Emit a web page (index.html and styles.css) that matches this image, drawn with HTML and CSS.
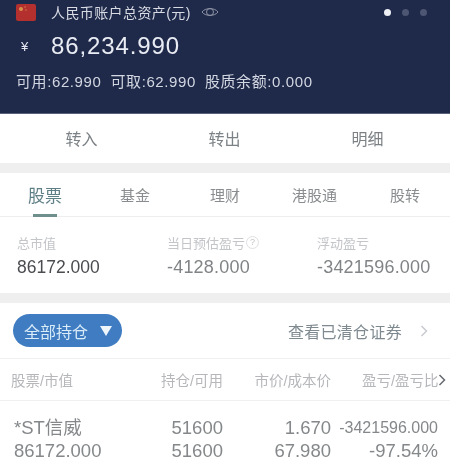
FILE: index.html
```html
<!DOCTYPE html>
<html lang="zh">
<head>
<meta charset="utf-8">
<title>人民币账户总资产</title>
<link rel="stylesheet" href="styles.css">
</head>
<body>
<main class="page">
  <header class="hero">
    <div class="hero-top">
      <svg class="flag" viewBox="0 0 20 17" width="20" height="17"><rect width="20" height="17" rx="2" fill="#b3302e"/><circle cx="5" cy="5" r="2" fill="#d8934a"/><circle cx="9" cy="3" r=".7" fill="#d8934a"/><circle cx="10" cy="6" r=".7" fill="#d8934a"/></svg>
      <span class="hero-title">人民币账户总资产(元)</span>
      <svg class="eye" viewBox="0 0 18 12" width="18" height="12" fill="none" stroke="#8d93a5" stroke-width="1"><path d="M1 6C4 1.500 14 1.500 17 6C14 10.500 4 10.500 1 6Z"/><circle cx="9" cy="6" r="3.500"/></svg>
      <div class="dots"><i class="dot on"></i><i class="dot"></i><i class="dot"></i></div>
    </div>
    <div class="total"><span class="yen">¥</span><span class="amount">86,234.990</span></div>
    <div class="balances"><span>可用:62.990</span><span>可取:62.990</span><span>股质余额:0.000</span></div>
  </header>

  <nav class="actions"><span>转入</span><span>转出</span><span>明细</span></nav>

  <section class="panel">
    <nav class="tabs">
      <span class="tab active">股票</span><span class="tab">基金</span><span class="tab">理财</span><span class="tab">港股通</span><span class="tab">股转</span>
    </nav>
    <div class="stats">
      <div class="stat"><div class="stat-label">总市值</div><div class="stat-value dark">86172.000</div></div>
      <div class="stat"><div class="stat-label">当日预估盈亏<span class="help">?</span></div><div class="stat-value">-4128.000</div></div>
      <div class="stat"><div class="stat-label">浮动盈亏</div><div class="stat-value">-3421596.000</div></div>
    </div>
  </section>

  <section class="holdings">
    <div class="filter-row">
      <button class="pill">全部持仓<span class="caret"></span></button>
      <span class="cleared">查看已清仓证券</span>
      <svg class="chev" viewBox="0 0 8 12" width="8" height="12" fill="none" stroke="#c9cbd0" stroke-width="1.500"><path d="M1.500 1L6.500 6L1.500 11"/></svg>
    </div>
    <div class="table-head">
      <span class="col1">股票/市值</span><span class="col2">持仓/可用</span><span class="col3">市价/成本价</span><span class="col4">盈亏/盈亏比</span>
      <svg class="head-chev" viewBox="0 0 8 12" width="8" height="12" fill="none" stroke="#666a70" stroke-width="1.500"><path d="M1.500 1L6.500 6L1.500 11"/></svg>
    </div>
    <div class="row">
      <div class="col1"><div>*ST信威</div><div>86172.000</div></div>
      <div class="col2"><div>51600</div><div>51600</div></div>
      <div class="col3"><div>1.670</div><div>67.980</div></div>
      <div class="col4"><div class="small">-3421596.000</div><div>-97.54%</div></div>
    </div>
  </section>
</main>
</body>
</html>
```
FILE: styles.css
```css
* { box-sizing: border-box; }
html, body { margin: 0; padding: 0; }
body {
  width: 450px;
  height: 476px;
  overflow: hidden;
  background: #fff;
  font-family: "Liberation Sans", "Noto Sans CJK SC", sans-serif;
}
.page { display: flex; flex-direction: column; height: 476px; filter: blur(0.4px); }

.hero {
  height: 114px;
  background: #1f2a4a;
  color: #e4e7ef;
  padding: 3px 0 0 16px;
  border-bottom: 1px solid #59607a;
}
.hero-top { display: flex; align-items: center; height: 18px; }
.flag { margin-right: 15px; }
.hero-title { font-size: 14px; color: #d8dbe4; letter-spacing: 0.4px; }
.eye { margin-left: 10px; }
.dots { display: flex; gap: 11px; margin-left: auto; margin-right: 23px; }
.dot { width: 7px; height: 7px; border-radius: 50%; background: #4d5672; }
.dot.on { background: #eef0f6; }
.total { display: flex; align-items: center; height: 36px; margin-top: 7px; }
.yen { width: 35px; padding-left: 5px; font-size: 13px; }
.amount { font-size: 24px; letter-spacing: 0.9px; color: #e9ecf3; }
.balances { display: flex; gap: 9px; margin-top: 9px; font-size: 15px; line-height: 18px; color: #d3d7e2; letter-spacing: 0.6px; }

.actions {
  display: flex;
  height: 49px;
  align-items: center;
  padding-bottom: 2px;
  background: #fff;
  font-size: 16px;
  color: #7c8185;
}
.actions span { width: 143px; text-align: center; }
.actions span:nth-child(1) { margin-left: 10px; }

.panel { border-top: 10px solid #efefef; background: #fff; }
.tabs {
  display: flex;
  height: 44px;
  align-items: center;
  border-bottom: 1px solid #eeeeee;
  font-size: 15px;
  color: #8a8d8f;
  padding-left: 28px;
}
.tab { position: relative; }
.tab:nth-child(2) { margin-left: 58px; }
.tab:nth-child(3) { margin-left: 60px; }
.tab:nth-child(4) { margin-left: 52px; }
.tab:nth-child(5) { margin-left: 53px; }
.tab.active { font-size: 17px; color: #5f7f86; }
.tab.active::after {
  content: "";
  position: absolute;
  left: 5px;
  right: 5px;
  bottom: -10px;
  height: 3px;
  background: #6f8f8c;
}
.stats { display: flex; height: 76px; padding: 17px 0 0 17px; }
.stat:nth-child(1) { width: 150px; }
.stat:nth-child(2) { width: 150px; }
.stat-label { display: flex; align-items: center; height: 16px; font-size: 13px; color: #c3c5c8; }
.help {
  display: inline-flex;
  width: 13px;
  height: 13px;
  margin-left: 1px;
  align-items: center;
  justify-content: center;
  border: 1px solid #dfe0e2;
  border-radius: 50%;
  font-size: 9px;
}
.stat-value { margin-top: 7px; font-size: 18px; line-height: 21px; color: #818486; letter-spacing: 0.2px; }
.stat-value.dark { color: #4a4c50; font-size: 17.5px; letter-spacing: 0; }

.holdings { flex: 1; border-top: 10px solid #efefef; background: #fff; }
.filter-row {
  display: flex;
  align-items: center;
  height: 56px;
  border-bottom: 1px solid #f0f0f0;
  padding: 0 22px 0 13px;
}
.pill {
  display: flex;
  align-items: center;
  width: 109px;
  height: 33px;
  padding: 0 0 0 11px;
  border: 0;
  border-radius: 17px;
  background: #3f7cc2;
  color: #d9ecf8;
  font: inherit;
  font-size: 16px;
}
.caret {
  margin-left: 12px;
  border-style: solid;
  border-width: 10px 6px 0;
  border-color: #eef5fb transparent transparent;
}
.cleared { margin-left: auto; margin-right: 18px; font-size: 16px; color: #7f8a90; letter-spacing: 0.3px; }

.table-head {
  display: flex;
  align-items: center;
  height: 42px;
  border-bottom: 1px solid #f0f0f0;
  padding-left: 11px;
  font-size: 14.5px;
  color: #b5b7ba;
  white-space: nowrap;
  overflow: hidden;
}
.head-chev { flex: none; }
.col1 { width: 91px; flex: none; }
.col2 { width: 121px; flex: none; text-align: right; }
.col3 { width: 108px; flex: none; text-align: right; }
.col4 { width: 107px; flex: none; text-align: right; }
.table-head .col4 { padding-left: 31px; text-align: left; overflow: hidden; }

.row {
  display: flex;
  padding: 15px 0 0 14px;
  font-size: 18.5px;
  line-height: 23px;
  color: #85888a;
  white-space: nowrap;
}
.row .col1 { width: 88px; }
.row .col3 { width: 108px; }
.row .small { font-size: 16px; }
```
